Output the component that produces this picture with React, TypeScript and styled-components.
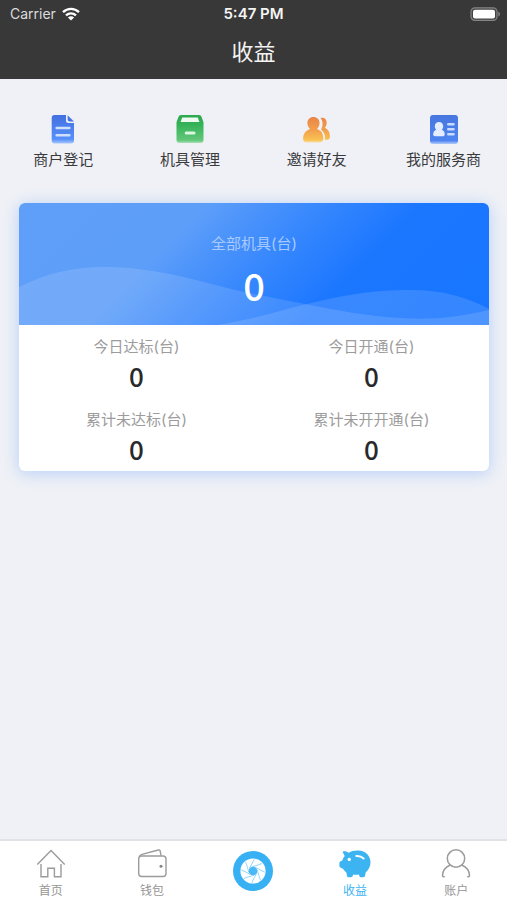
import React from "react";
import styled, { createGlobalStyle } from "styled-components";

const GlobalStyle = createGlobalStyle`
  *, *::before, *::after { box-sizing: border-box; }
  body {
    margin: 0;
    background: #eff1f6;
    color: #333;
    font-family: Inter, "Noto Sans CJK SC", sans-serif;
  }
`;

const Page = styled.div`
  min-height: 100vh;
  display: flex;
  flex-direction: column;
`;

const Header = styled.header`
  background: #383838;
  color: #f4f4f4;
`;

const StatusBar = styled.div`
  display: grid;
  grid-template-columns: 1fr auto 1fr;
  align-items: center;
  height: 27px;
  padding: 0 6px;
  font-size: 14px;
  line-height: 20px;
`;

const Carrier = styled.span`
  display: flex;
  align-items: center;
  gap: 6px;
  padding-left: 4px;
  color: #dcdcdc;
`;

const Clock = styled.time`
  font-size: 15px;
  font-weight: 600;
`;

const BatterySlot = styled.span`
  display: flex;
  justify-content: flex-end;
`;

const Title = styled.h1`
  margin: 0;
  padding: 9px 0 11px;
  font-size: 22px;
  line-height: 32px;
  font-weight: 400;
  text-align: center;
`;

const Main = styled.main`
  flex: 1;
  padding-bottom: 24px;
`;

const Shortcuts = styled.nav`
  display: grid;
  grid-template-columns: repeat(4, 1fr);
  padding: 34px 0 32px;
`;

const Shortcut = styled.button`
  display: flex;
  flex-direction: column;
  align-items: center;
  gap: 4px;
  padding: 0;
  border: 0;
  background: none;
  color: #3a3a3c;
  font: inherit;
  font-size: 15px;
  line-height: 22px;
  white-space: nowrap;
  cursor: pointer;
`;

const Card = styled.section`
  margin: 0 18px 0 19px;
  border-radius: 6px;
  background: #fff;
  box-shadow: 0 2px 16px rgba(64, 134, 255, 0.32);
`;

const Hero = styled.div`
  position: relative;
  overflow: hidden;
  border-radius: 6px 6px 0 0;
  padding: 30px 0 18px;
  background: linear-gradient(135deg, #5f9ff9 0%, #5d9ef9 32%, #3a89fd 50%, #1c77ff 68%, #1775ff 100%);
  text-align: center;
`;

const Waves = styled.svg`
  position: absolute;
  inset: 0;
  width: 100%;
  height: 100%;
`;

const HeroLabel = styled.div`
  position: relative;
  color: #a9cbff;
  font-size: 15px;
  line-height: 22px;
`;

const HeroValue = styled.div`
  position: relative;
  margin-top: 8px;
  color: #fff;
  font-family: "Noto Sans CJK SC", sans-serif;
  font-size: 38px;
  line-height: 44px;
  font-weight: 500;
`;

const Stats = styled.dl`
  display: grid;
  grid-template-columns: 1fr 1fr;
  margin: 0;
`;

const Stat = styled.div`
  padding: 11px 0 6px;
  text-align: center;
`;

const StatLabel = styled.dt`
  color: #9c9c9c;
  font-size: 15px;
  line-height: 22px;
`;

const StatValue = styled.dd`
  margin: 2px 0 0;
  color: #29292b;
  font-family: "Noto Sans CJK SC", sans-serif;
  font-size: 26px;
  line-height: 32px;
  font-weight: 500;
`;

const TabBar = styled.nav`
  position: sticky;
  bottom: 0;
  display: grid;
  grid-template-columns: repeat(5, 1fr);
  border-top: 2px solid #e1e2e6;
  background: #fff;
`;

const Tab = styled.a<{ $active?: boolean }>`
  display: flex;
  flex-direction: column;
  align-items: center;
  gap: 2px;
  padding-top: 7px;
  color: ${(p) => (p.$active ? "#3db4f2" : "#969696")};
  font-size: 12px;
  line-height: 18px;
  text-decoration: none;
`;

const WifiIcon = () => (
  <svg width="18" height="14" viewBox="0 0 18 14" fill="none" stroke="#fff" strokeWidth="2.4" aria-hidden="true">
    <path d="M1 5.1C5.6.8 12.4.8 17 5.1" />
    <path d="M4 8.4C7 5.7 11 5.7 14 8.4" />
    <path d="M9 13.6 5.9 10.5C7.7 8.9 10.3 8.9 12.1 10.5Z" fill="#fff" stroke="none" />
  </svg>
);

const BatteryIcon = () => (
  <svg width="31" height="14" viewBox="0 0 31 14" aria-hidden="true">
    <rect x="1" y="0.8" width="26" height="12.6" rx="3.8" fill="#444" stroke="#858585" strokeWidth="1.2" />
    <rect x="3" y="2.7" width="22" height="8.8" rx="2" fill="#fff" />
    <path d="M28.3 4.8c2.2.7 2.2 3.9 0 4.6z" fill="#858585" />
  </svg>
);

const DocumentIcon = () => (
  <svg width="30" height="32" viewBox="0 0 30 32" aria-hidden="true">
    <defs>
      <linearGradient id="docFill" x1="0" y1="0" x2="0" y2="1">
        <stop offset="0" stopColor="#4470df" />
        <stop offset="0.85" stopColor="#5590fb" />
        <stop offset="1" stopColor="#a9c8fb" />
      </linearGradient>
    </defs>
    <path d="M6.5 2H18v5.5q0 2.5 2.5 2.5H26v17.5q0 3-3 3H6.7q-3 0-3-3V5Q3.7 2 6.5 2Z" fill="url(#docFill)" />
    <path d="M19.6 2.2 26 8.6h-4.4q-2 0-2-2Z" fill="#4675e6" />
    <path d="M8.6 15h12.8M8.6 22.3h12.8" stroke="#cfe0ff" strokeWidth="2.4" strokeLinecap="round" />
  </svg>
);

const BoxIcon = () => (
  <svg width="30" height="32" viewBox="0 0 30 32" aria-hidden="true">
    <defs>
      <linearGradient id="boxFill" x1="0" y1="0" x2="0" y2="1">
        <stop offset="0" stopColor="#2da950" />
        <stop offset="0.35" stopColor="#35b258" />
        <stop offset="0.9" stopColor="#62c779" />
        <stop offset="1" stopColor="#a8e0b5" />
      </linearGradient>
    </defs>
    <path d="M6 2h18q2 0 2.6 1.9l1.9 5.4V27q0 3-3 3h-21q-3 0-3-3V9.3l1.9-5.4Q4 2 6 2Z" fill="url(#boxFill)" />
    <path d="M7.2 4.6h15.6l1.6 4.5H5.6Z" fill="#effaf1" />
    <path d="M11.2 20h7.8" stroke="#dcf6e1" strokeWidth="3" strokeLinecap="round" />
  </svg>
);

const FriendsIcon = () => (
  <svg width="30" height="32" viewBox="0 0 30 32" aria-hidden="true">
    <defs>
      <linearGradient id="friendsFill" gradientUnits="userSpaceOnUse" x1="0" y1="4" x2="0" y2="30">
        <stop offset="0" stopColor="#ea8548" />
        <stop offset="0.5" stopColor="#f2a04d" />
        <stop offset="0.88" stopColor="#f9c152" />
        <stop offset="1" stopColor="#fbe4b5" />
      </linearGradient>
    </defs>
    <g fill="url(#friendsFill)">
      <path d="M18.6 4.9c3.4-1 6.1 1.2 6.1 4.6 0 2.1-.7 3.9-1.8 5.3 3.3 1.6 5.2 5 5.1 8.7 0 2-.9 3.1-2.6 3.2h-2.4c.4-4.6-1-7.9-4-10.3 2.3-3.8 2-8.5-.4-11.5Z" />
      <path d="M11.4 4c3.6 0 6.1 2.4 6.1 5.9 0 2.4-.9 4.5-2.5 6 4.5 1.4 6.5 5 6.3 9.7-.1 2.6-1.3 3.8-3.8 3.8H5c-2.7 0-3.9-1.2-3.9-3.9 0-4.6 2.6-8.2 6.9-9.6-1.6-1.5-2.6-3.6-2.6-6C5.4 6.4 7.8 4 11.4 4Z" />
    </g>
  </svg>
);

const ProviderIcon = () => (
  <svg width="30" height="32" viewBox="0 0 30 32" aria-hidden="true">
    <defs>
      <linearGradient id="providerFill" x1="0" y1="0" x2="0" y2="1">
        <stop offset="0" stopColor="#4877df" />
        <stop offset="0.88" stopColor="#4d84f1" />
        <stop offset="1" stopColor="#b0cafa" />
      </linearGradient>
    </defs>
    <rect x="1" y="2" width="28" height="29" rx="3" fill="url(#providerFill)" />
    <path d="M10 9c2.6 0 4.2 1.8 4.2 4.2 0 1.5-.5 2.7-1.4 3.6 2 .8 3 2.6 2.9 4.4 0 1.4-.8 2-2 2H6.2c-1.3 0-2-.7-2-2 0-1.9 1.1-3.6 3-4.4-.9-.9-1.4-2.1-1.4-3.6C5.8 10.8 7.4 9 10 9Z" fill="#e3edff" />
    <path d="M19.2 11.3h5.4M19.2 16.3h5.4M19.2 21.3h5.4" stroke="#c8dbff" strokeWidth="2.4" strokeLinecap="round" />
  </svg>
);

const HomeIcon = () => (
  <svg width="32" height="32" viewBox="0 0 32 32" fill="none" stroke="#9b9b9b" strokeWidth="1.4" aria-hidden="true">
    <path d="M2.3 16.4 16 2.5l13.7 13.9" />
    <path d="M6 16v12.7h6.8v-8.4h6.6v8.4H26V16" />
  </svg>
);

const WalletIcon = () => (
  <svg width="32" height="32" viewBox="0 0 32 32" fill="none" stroke="#9b9b9b" strokeWidth="1.4" aria-hidden="true">
    <rect x="2.7" y="8" width="27.3" height="20.5" rx="3" />
    <path d="M3.3 8.8Q4 6.9 6 6.3L22.3 2q1.6-.4 1.9 1.2l.8 4.3" />
    <circle cx="25" cy="18.2" r="1.5" fill="#858585" stroke="none" />
  </svg>
);

const bladeCount = 8;

const ApertureIcon = () => (
  <svg width="42" height="46" viewBox="0 -2 42 46" aria-hidden="true">
    <circle cx="21" cy="21" r="20" fill="#38b1f4" />
    <circle cx="21" cy="21" r="12.6" fill="#fff" />
    {Array.from({ length: bladeCount }, (_, i) => (
      <path key={i} d="M20 16.7Q25 15.5 30.2 13.5" fill="none" stroke="#8ad3f8" strokeWidth="0.9" transform={`rotate(${(i * 360) / bladeCount} 21 21)`} />
    ))}
    <circle cx="21" cy="21" r="4.3" fill="#49b8f4" />
  </svg>
);

const PigIcon = () => (
  <svg width="32" height="32" viewBox="0 0 32 32" aria-hidden="true">
    <path
      d="M4.6 3.2c2.3-.2 3.9.5 5.1 1.6 2.7-1.7 6-2.4 9.8-2.2 6.9.3 12 5.1 12 11.7 0 4.1-1.7 7.5-4.7 10l-.7 3.3c-.2 1.1-.8 1.6-1.9 1.6h-1.9c-1.1 0-1.7-.5-2-1.5l-.3-1.1c-2 .3-4 .3-5.8 0l-.4 1.2c-.3 1-.9 1.4-1.9 1.4H9.8c-1 0-1.6-.5-1.8-1.5l-.7-3.3c-1.4-1-2.5-2.2-3.3-3.6l-2.3-1.1C.8 19.3.4 18.7.4 17.8v-2.6c0-1 .4-1.6 1.3-2l1.6-.7c.5-1.8 1.3-3.3 2.4-4.6L4 4.7c-.4-.8-.2-1.3.6-1.5Z"
      fill="#3db4f2"
    />
    <circle cx="10.2" cy="11.5" r="1.7" fill="#fff" />
    <path d="M17.3 8c3-.2 5.5.7 7.3 2.5" fill="none" stroke="#fff" strokeWidth="2" strokeLinecap="round" />
  </svg>
);

const PersonIcon = () => (
  <svg width="32" height="32" viewBox="0 0 32 32" fill="none" stroke="#9b9b9b" strokeWidth="1.5" aria-hidden="true">
    <circle cx="16" cy="10.5" r="8.7" />
    <path d="M10 17.3C5.5 19.1 2.8 23 2.5 27.3c-.1 1.3.7 1.6 2.2 1.2M22 17.3c4.5 1.8 7.2 5.7 7.5 10 .1 1.3-.7 1.6-2.2 1.2" />
  </svg>
);

const shortcuts = [
  { label: "商户登记", Icon: DocumentIcon },
  { label: "机具管理", Icon: BoxIcon },
  { label: "邀请好友", Icon: FriendsIcon },
  { label: "我的服务商", Icon: ProviderIcon },
];

const stats = [
  { label: "今日达标(台)", value: 0 },
  { label: "今日开通(台)", value: 0 },
  { label: "累计未达标(台)", value: 0 },
  { label: "累计未开开通(台)", value: 0 },
];

export default function App() {
  return (
    <Page>
      <GlobalStyle />
      <Header>
        <StatusBar>
          <Carrier>
            Carrier
            <WifiIcon />
          </Carrier>
          <Clock>5:47 PM</Clock>
          <BatterySlot>
            <BatteryIcon />
          </BatterySlot>
        </StatusBar>
        <Title>收益</Title>
      </Header>
      <Main>
        <Shortcuts>
          {shortcuts.map(({ label, Icon }) => (
            <Shortcut key={label} type="button">
              <Icon />
              {label}
            </Shortcut>
          ))}
        </Shortcuts>
        <Card>
          <Hero>
            <Waves viewBox="0 0 470 122" preserveAspectRatio="none" aria-hidden="true">
              <path d="M0 84C30 69 58 63 92 64 150 66 185 81 235 91 275 99 300 104 335 110 390 118 425 118 470 107V122H0Z" fill="#fff" fillOpacity="0.13" />
              <path d="M198 122C235 116 260 108 288 101 330 91 355 87 392 87 425 87 450 95 470 106V122Z" fill="#fff" fillOpacity="0.13" />
            </Waves>
            <HeroLabel>全部机具(台)</HeroLabel>
            <HeroValue>0</HeroValue>
          </Hero>
          <Stats>
            {stats.map(({ label, value }) => (
              <Stat key={label}>
                <StatLabel>{label}</StatLabel>
                <StatValue>{value}</StatValue>
              </Stat>
            ))}
          </Stats>
        </Card>
      </Main>
      <TabBar>
        <Tab href="#home">
          <HomeIcon />
          首页
        </Tab>
        <Tab href="#wallet">
          <WalletIcon />
          钱包
        </Tab>
        <Tab href="#scan" aria-label="扫描">
          <ApertureIcon />
        </Tab>
        <Tab href="#earnings" $active aria-current="page">
          <PigIcon />
          收益
        </Tab>
        <Tab href="#account">
          <PersonIcon />
          账户
        </Tab>
      </TabBar>
    </Page>
  );
}
